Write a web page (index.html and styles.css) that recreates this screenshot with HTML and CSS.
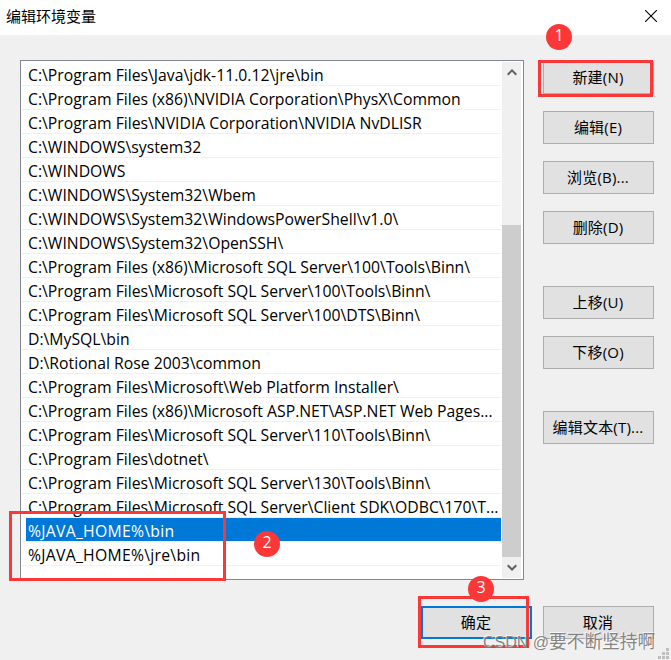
FILE: index.html
```
<!DOCTYPE html>
<html lang="zh-CN">
<head>
<meta charset="utf-8">
<title>编辑环境变量</title>
<link rel="stylesheet" href="styles.css">
</head>
<body>
<main class="dialog">
  <header class="titlebar">
    <h1>编辑环境变量</h1>
    <svg class="close" width="12" height="12" viewBox="0 0 12 12"><path d="M0 0l12 12M12 0L0 12"/></svg>
  </header>
  <div class="content">
    <section class="listbox">
      <ul class="rows">
        <li><span>C:\Program Files\Java\jdk-11.0.12\jre\bin</span></li>
        <li><span>C:\Program Files (x86)\NVIDIA Corporation\PhysX\Common</span></li>
        <li><span>C:\Program Files\NVIDIA Corporation\NVIDIA NvDLISR</span></li>
        <li><span>C:\WINDOWS\system32</span></li>
        <li><span>C:\WINDOWS</span></li>
        <li><span>C:\WINDOWS\System32\Wbem</span></li>
        <li><span>C:\WINDOWS\System32\WindowsPowerShell\v1.0\</span></li>
        <li><span>C:\WINDOWS\System32\OpenSSH\</span></li>
        <li><span>C:\Program Files (x86)\Microsoft SQL Server\100\Tools\Binn\</span></li>
        <li><span>C:\Program Files\Microsoft SQL Server\100\Tools\Binn\</span></li>
        <li><span>C:\Program Files\Microsoft SQL Server\100\DTS\Binn\</span></li>
        <li><span>D:\MySQL\bin</span></li>
        <li><span>D:\Rotional Rose 2003\common</span></li>
        <li><span>C:\Program Files\Microsoft\Web Platform Installer\</span></li>
        <li><span>C:\Program Files (x86)\Microsoft ASP.NET\ASP.NET Web Pages...</span></li>
        <li><span>C:\Program Files\Microsoft SQL Server\110\Tools\Binn\</span></li>
        <li><span>C:\Program Files\dotnet\</span></li>
        <li><span>C:\Program Files\Microsoft SQL Server\130\Tools\Binn\</span></li>
        <li><span>C:\Program Files\Microsoft SQL Server\Client SDK\ODBC\170\T...</span></li>
        <li class="variable selected"><span>%JAVA_HOME%\bin</span></li>
        <li class="variable"><span>%JAVA_HOME%\jre\bin</span></li>
      </ul>
      <div class="scrollbar">
        <svg class="arrow" width="10" height="7" viewBox="0 0 10 7"><path d="M.7 5.7L5 1.4l4.3 4.3"/></svg>
        <div class="thumb"></div>
        <svg class="arrow" width="10" height="7" viewBox="0 0 10 7"><path d="M.7 1.2L5 5.5l4.3-4.3"/></svg>
      </div>
    </section>
    <nav class="actions">
      <button>新建(N)</button>
      <button>编辑(E)</button>
      <button>浏览(B)...</button>
      <button>删除(D)</button>
      <button class="group">上移(U)</button>
      <button>下移(O)</button>
      <button class="group">编辑文本(T)...</button>
    </nav>
  </div>
  <footer class="footer">
    <button class="primary">确定</button>
    <button>取消</button>
  </footer>
  <svg class="grip" width="11" height="11" viewBox="0 0 11 11"><path d="M8 0h3v3H8zM4 4h3v3H4zM8 4h3v3H8zM0 8h3v3H0zM4 8h3v3H4zM8 8h3v3H8z"/></svg>
  <div class="mark mark-new"></div>
  <div class="mark mark-java"></div>
  <div class="mark mark-ok"></div>
  <span class="badge badge-1">1</span>
  <span class="badge badge-2">2</span>
  <span class="badge badge-3">3</span>
  <span class="watermark">CSDN @<span class="handle">要不断坚持啊</span></span>
</main>
</body>
</html>
```
FILE: styles.css
```
* { box-sizing: border-box; }
body { margin: 0; }
.dialog {
  position: relative;
  width: 671px;
  height: 660px;
  overflow: hidden;
  background: #f0f0f0;
  color: #000;
  font: 15px/23px "Open Sans", "Noto Sans CJK SC", sans-serif;
}
.titlebar {
  display: flex;
  align-items: center;
  justify-content: space-between;
  height: 35px;
  padding: 0 14px 3px 6px;
  background: #fff;
}
.titlebar h1 { margin: 0; font-size: 15px; font-weight: 400; }
.close { fill: none; stroke: #000; stroke-width: 1.1; }
.content { display: flex; gap: 19px; padding: 25px 17px 0 20px; }
.listbox {
  display: flex;
  width: 504px;
  height: 520px;
  padding: 1px;
  border: 1px solid #828790;
  background: #fff;
}
.rows {
  width: 479px;
  margin: 0 1px 0 0;
  padding: 0;
  list-style: none;
  overflow: hidden;
  font-size: 15.76px;
  font-kerning: none;
}
.rows li {
  height: 24px;
  padding-left: 4px;
  border-bottom: 1px solid #f0f0f0;
  white-space: nowrap;
}
.rows span { display: block; height: 23px; padding-left: 2px; line-height: 26px; }
.rows .variable { letter-spacing: .27px; }
.rows .selected span { background: #0078d7; color: #fff; }
.scrollbar {
  display: flex;
  flex-direction: column;
  align-items: center;
  justify-content: space-between;
  width: 19px;
  padding: 7px 0;
  background: #f0f0f0;
}
.arrow { fill: none; stroke: #606060; stroke-width: 2; }
.thumb { width: 19px; height: 332px; margin-top: 142px; background: #cdcdcd; }
.actions { display: flex; flex-direction: column; gap: 17px; padding-top: 1px; }
button {
  width: 111px;
  height: 33px;
  padding: 0 1px 0 0;
  border: 1px solid #adadad;
  border-radius: 0;
  background: #e1e1e1;
  color: #000;
  font: inherit;
  letter-spacing: .2px;
}
.actions .group { margin-top: 25px; }
.footer { display: flex; justify-content: flex-end; gap: 11px; padding: 26px 17px 0 0; }
.footer .primary { border: 2px solid #0078d7; }
.grip { position: absolute; right: 2px; bottom: 1px; fill: #bfbfbf; }
.mark { position: absolute; border: 3px solid #fc3737; }
.mark-new { left: 538px; top: 60px; width: 115px; height: 37px; }
.mark-java { left: 9px; top: 511px; width: 217px; height: 70px; }
.mark-ok { left: 418px; top: 596px; width: 111px; height: 52px; }
.badge {
  position: absolute;
  width: 26px;
  height: 26px;
  border-radius: 50%;
  background: #fc3737;
  color: #fff;
  font: 16px/23px "Open Sans", sans-serif;
  text-align: center;
}
.badge-1 { left: 546px; top: 24px; }
.badge-2 { left: 254px; top: 531px; }
.badge-3 { left: 468px; top: 576px; }
.watermark {
  position: absolute;
  left: 483px;
  top: 630px;
  color: rgba(125, 125, 125, .95);
  font: 16px/24px "Liberation Sans", "Noto Sans CJK SC", sans-serif;
  text-shadow: -1px -1px 0 rgba(255, 255, 255, .7);
  white-space: nowrap;
}
.watermark .handle { font-size: 17.7px; }
```
